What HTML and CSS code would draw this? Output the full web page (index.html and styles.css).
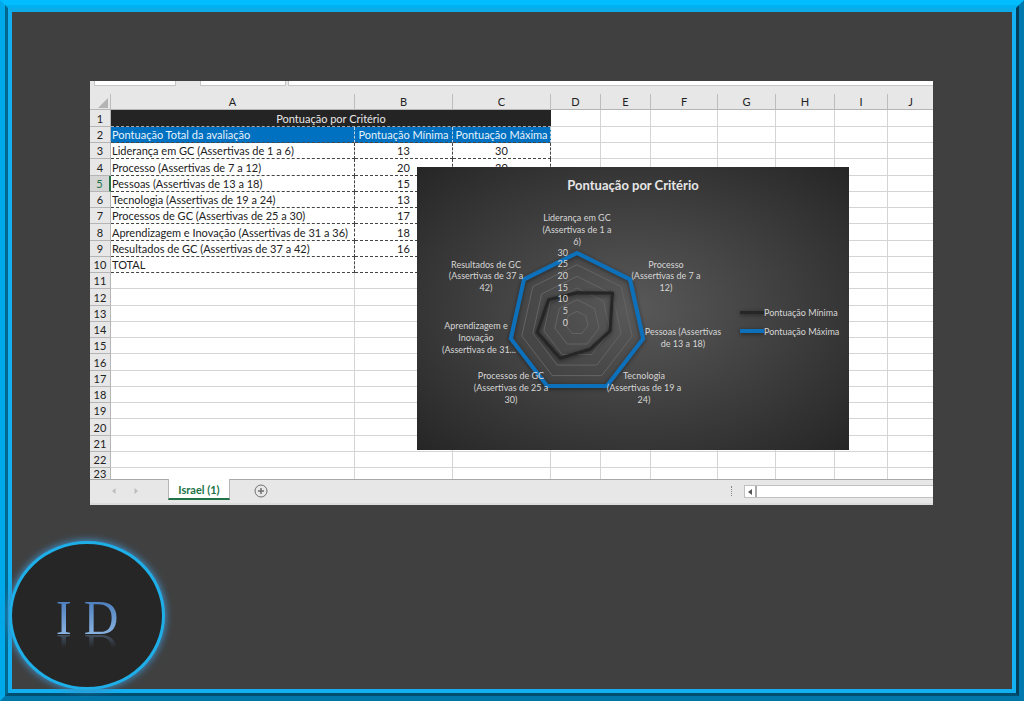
FILE: index.html
```html
<!DOCTYPE html>
<html lang="pt-BR">
<head>
<meta charset="utf-8">
<title>Pontuação por Critério</title>
<link rel="stylesheet" href="styles.css">
</head>
<body>
<div class="frame frame-outer"><div class="frame frame-middle"><main class="frame frame-inner">
  <section class="sheet">
    <div class="toolbar"><span class="name-box"></span><span class="fx-box"></span><span class="formula-box"></span></div>
    <div class="grid">
      <table>
        <colgroup><col class="c-row"><col class="c-a"><col class="c-b"><col class="c-b"><col class="c-d"><col class="c-d"><col class="c-f"><col class="c-g"><col class="c-h"><col class="c-i"><col></colgroup>
        <thead><tr><th class="corner"><svg width="10" height="10" viewBox="0 0 10 10"><path d="M10 0V10H0Z" fill="#b4b4b4"/></svg></th><th>A</th><th>B</th><th>C</th><th>D</th><th>E</th><th>F</th><th>G</th><th>H</th><th>I</th><th>J</th></tr></thead>
        <tbody>
          <tr class="title"><th>1</th><td colspan="3">Pontuação por Critério</td><td></td><td></td><td></td><td></td><td></td><td></td><td></td></tr>
          <tr class="data head"><th>2</th><td>Pontuação Total da avaliação</td><td>Pontuação Mínima</td><td>Pontuação Máxima</td><td></td><td></td><td></td><td></td><td></td><td></td><td></td></tr>
          <tr class="data"><th>3</th><td>Liderança em GC (Assertivas de 1 a 6)</td><td>13</td><td>30</td><td></td><td></td><td></td><td></td><td></td><td></td><td></td></tr>
          <tr class="data"><th>4</th><td>Processo (Assertivas de 7 a 12)</td><td>20</td><td>30</td><td></td><td></td><td></td><td></td><td></td><td></td><td></td></tr>
          <tr class="data active"><th>5</th><td>Pessoas (Assertivas de 13 a 18)</td><td>15</td><td></td><td></td><td></td><td></td><td></td><td></td><td></td><td></td></tr>
          <tr class="data"><th>6</th><td>Tecnologia (Assertivas de 19 a 24)</td><td>13</td><td></td><td></td><td></td><td></td><td></td><td></td><td></td><td></td></tr>
          <tr class="data"><th>7</th><td>Processos de GC (Assertivas de 25 a 30)</td><td>17</td><td></td><td></td><td></td><td></td><td></td><td></td><td></td><td></td></tr>
          <tr class="data"><th>8</th><td>Aprendizagem e Inovação (Assertivas de 31 a 36)</td><td>18</td><td></td><td></td><td></td><td></td><td></td><td></td><td></td><td></td></tr>
          <tr class="data"><th>9</th><td>Resultados de GC (Assertivas de 37 a 42)</td><td>16</td><td></td><td></td><td></td><td></td><td></td><td></td><td></td><td></td></tr>
          <tr class="data"><th>10</th><td>TOTAL</td><td></td><td></td><td></td><td></td><td></td><td></td><td></td><td></td><td></td></tr>
          <tr><th>11</th><td></td><td></td><td></td><td></td><td></td><td></td><td></td><td></td><td></td><td></td></tr>
          <tr><th>12</th><td></td><td></td><td></td><td></td><td></td><td></td><td></td><td></td><td></td><td></td></tr>
          <tr><th>13</th><td></td><td></td><td></td><td></td><td></td><td></td><td></td><td></td><td></td><td></td></tr>
          <tr><th>14</th><td></td><td></td><td></td><td></td><td></td><td></td><td></td><td></td><td></td><td></td></tr>
          <tr><th>15</th><td></td><td></td><td></td><td></td><td></td><td></td><td></td><td></td><td></td><td></td></tr>
          <tr><th>16</th><td></td><td></td><td></td><td></td><td></td><td></td><td></td><td></td><td></td><td></td></tr>
          <tr><th>17</th><td></td><td></td><td></td><td></td><td></td><td></td><td></td><td></td><td></td><td></td></tr>
          <tr><th>18</th><td></td><td></td><td></td><td></td><td></td><td></td><td></td><td></td><td></td><td></td></tr>
          <tr><th>19</th><td></td><td></td><td></td><td></td><td></td><td></td><td></td><td></td><td></td><td></td></tr>
          <tr><th>20</th><td></td><td></td><td></td><td></td><td></td><td></td><td></td><td></td><td></td><td></td></tr>
          <tr><th>21</th><td></td><td></td><td></td><td></td><td></td><td></td><td></td><td></td><td></td><td></td></tr>
          <tr><th>22</th><td></td><td></td><td></td><td></td><td></td><td></td><td></td><td></td><td></td><td></td></tr>
          <tr class="last"><th>23</th><td></td><td></td><td></td><td></td><td></td><td></td><td></td><td></td><td></td><td></td></tr>
        </tbody>
      </table>
    </div>
    <svg class="chart" width="432" height="283" viewBox="0 0 432 283" role="img" aria-label="Gráfico de radar: Pontuação por Critério">
      <defs>
        <radialGradient id="chart-bg" cx=".5" cy=".5" r=".7"><stop offset="0" stop-color="#595959"/><stop offset="1" stop-color="#262626"/></radialGradient>
        <polygon id="ring" points="0,-70 53,-43.6 66.2,15.6 29.7,63.1 -29.7,63.1 -66.2,15.6 -53,-43.6"/>
        <filter id="shadow" x="-20%" y="-20%" width="140%" height="140%"><feDropShadow dx="0" dy="1" stdDeviation="2" flood-color="#000" flood-opacity=".5"/></filter>
      </defs>
      <rect width="432" height="283" fill="url(#chart-bg)"/>
      <text class="chart-title" x="216" y="23">Pontuação por Critério</text>
      <g class="rings" transform="translate(160 156)">
        <use href="#ring" transform="scale(.1667)"/><use href="#ring" transform="scale(.3333)"/><use href="#ring" transform="scale(.5)"/><use href="#ring" transform="scale(.6667)"/><use href="#ring" transform="scale(.8333)"/>
      </g>
      <g fill="none" stroke-linejoin="round" filter="url(#shadow)">
        <polygon points="160,125.7 195.5,125.9 193.1,163.8 173,182.3 143.2,191.3 120.3,165.3 131.6,132.7" stroke="#252525" stroke-width="3"/>
        <use href="#ring" transform="translate(160 156)" stroke="#0f6fba" stroke-width="4"/>
      </g>
      <g class="axis">
        <text x="151" y="89">30</text><text x="151" y="100">25</text><text x="151" y="112">20</text><text x="151" y="124">15</text><text x="151" y="135">10</text><text x="151" y="147">5</text><text x="151" y="159">0</text>
      </g>
      <g class="labels">
        <text><tspan x="160" y="54">Liderança em GC</tspan><tspan x="160" y="66">(Assertivas de 1 a</tspan><tspan x="160" y="78">6)</tspan></text>
        <text><tspan x="249" y="101">Processo</tspan><tspan x="249" y="112">(Assertivas de 7 a</tspan><tspan x="249" y="124">12)</tspan></text>
        <text><tspan x="266" y="168">Pessoas (Assertivas</tspan><tspan x="266" y="180">de 13 a 18)</tspan></text>
        <text><tspan x="227" y="212">Tecnologia</tspan><tspan x="227" y="224">(Assertivas de 19 a</tspan><tspan x="227" y="236">24)</tspan></text>
        <text><tspan x="94" y="212">Processos de GC</tspan><tspan x="94" y="224">(Assertivas de 25 a</tspan><tspan x="94" y="236">30)</tspan></text>
        <text><tspan x="59" y="162">Aprendizagem e</tspan><tspan x="59" y="174">Inovação</tspan><tspan x="62" y="186">(Assertivas de 31...</tspan></text>
        <text><tspan x="69" y="101">Resultados de GC</tspan><tspan x="69" y="112">(Assertivas de 37 a</tspan><tspan x="69" y="124">42)</tspan></text>
      </g>
      <g filter="url(#shadow)"><path d="M323 147h24v-3h-24z" fill="#252525"/><path d="M323 166h24v-4h-24z" fill="#0f6fba"/></g>
      <g class="legend"><text x="347" y="149">Pontuação Mínima</text><text x="347" y="168">Pontuação Máxima</text></g>
    </svg>
    <footer class="tabs">
      <div class="nav">
        <button type="button" aria-label="Planilha anterior"><svg width="4" height="6" viewBox="0 0 4 6"><path d="M3.5 0V6L0 3Z" fill="#bdbdbd"/></svg></button>
        <button type="button" aria-label="Próxima planilha"><svg width="4" height="6" viewBox="0 0 4 6"><path d="M.5 0V6L4 3Z" fill="#bdbdbd"/></svg></button>
      </div>
      <button type="button" class="tab">Israel (1)</button>
      <button type="button" class="add" aria-label="Nova planilha"><svg width="14" height="14" viewBox="0 0 14 14" fill="none" stroke="#707070"><circle cx="7" cy="7" r="6"/><path d="M7 4V10M4 7H10" stroke-width="1.5"/></svg></button>
      <span class="grip"></span>
      <div class="scroll"><button type="button" aria-label="Rolar para a esquerda"><svg width="4" height="6" viewBox="0 0 4 6"><path d="M4 0V6L0 3Z" fill="#555"/></svg></button><span class="track"></span></div>
    </footer>
  </section>
  <div class="logo"><span>I D</span></div>
</main></div></div>
</body>
</html>
```

FILE: styles.css
```css
* { box-sizing: border-box; }
body { margin: 0; font-family: Lato, "Open Sans", sans-serif; background: #404040; }
button { margin: 0; padding: 0; border: 0; background: none; font: inherit; }
svg { display: block; }

.frame { display: flex; flex-direction: column; border-style: solid; }
.frame > .frame { flex: 1; }
.frame-outer { min-height: 100vh; border-width: 5px; border-color: #00bdff #007aae #0077a8 #00a9ea; }
.frame-middle { border-width: 3px; border-color: #00b1f2 #003f5c #004e70 #00678f; }
.frame-inner { border-width: 4px; border-color: #0cace8 #14b2f2 #12b0f0 #12b0f0; background: #404040; }

.sheet { position: relative; margin: 69px 79px 0 78px; background: #fff; color: #222; }
.toolbar { display: flex; height: 13px; padding-left: 4px; background: #e7e7e7; }
.toolbar span { height: 5px; background: #fff; border: 1px solid #c6c6c6; border-top: 0; }
.name-box { width: 82px; margin-right: 24px; }
.fx-box { width: 86px; margin-right: 2px; }
.toolbar .formula-box { flex: 1; border-right: 0; }

.grid { height: 385px; overflow: hidden; }
table { width: 100%; table-layout: fixed; border-collapse: separate; border-spacing: 0; font-size: 11px; line-height: 15px; }
.c-row { width: 21px; }
.c-a { width: 244px; }
.c-b { width: 98px; }
.c-d { width: 50px; }
.c-f { width: 67px; }
.c-g { width: 58px; }
.c-h { width: 59px; }
.c-i { width: 53px; }
th, td { height: 16px; padding: 0; white-space: nowrap; border-right: 1px solid #d4d4d4; border-bottom: 1px solid #d4d4d4; }
tbody tr:nth-child(4n) > *, .title > * { height: 17px; }
th { font-weight: 400; background: #e7e7e7; border-color: #b5b5b5; }
thead th { border-right-color: #bdbdbd; }
th:last-child, td:last-child { border-right: 0; }
.corner svg { margin: 2px 0 0 8px; }
.title td:nth-child(2) { text-align: center; color: #e8e8e8; background: #242424; border-right: 0; border-bottom: 1px dashed #aaa; }
.data td:nth-child(-n+4) { text-align: center; border-right: 1px dashed #444; border-bottom: 1px dashed #444; }
.data td:nth-child(2) { text-align: left; padding-left: 1px; }
.head td:nth-child(-n+4) { color: #e6f2fc; background: #0070c0; border-right-color: #bcd; }
.active th { color: #217346; background: #d5d5d5; border-right: 2px solid #217346; }
.last > * { height: 11px; line-height: 11px; border-bottom: 0; }

.chart { position: absolute; left: 327px; top: 86px; }
.chart text { fill: #d6d6d6; font-size: 9px; }
.chart .chart-title { fill: #e6e6e6; font-size: 13px; font-weight: 700; text-anchor: middle; }
.axis { text-anchor: end; }
.labels { text-anchor: middle; }
.rings { fill: none; stroke: #646464; }
.rings use, #ring { vector-effect: non-scaling-stroke; }

.tabs { display: flex; align-items: flex-start; height: 26px; background: #e7e7e7; border-top: 1px solid #a8a8a8; border-bottom: 2px solid #dcdcdc; }
.nav { display: flex; justify-content: center; gap: 18px; width: 78px; padding: 8px 8px 0 0; }
.tab { width: 62px; height: 21px; margin-top: -1px; padding-top: 2px; color: #217346; background: #fff; border: 1px solid #b5b5b5; border-top: 0; border-bottom: 2px solid #217346; font-size: 11px; font-weight: 700; }
.add { margin: 4px 0 0 24px; }
.grip { height: 10px; margin: 6px 12px 0 auto; border-left: 1px dotted #888; }
.scroll { display: flex; width: 189px; height: 13px; margin-top: 5px; background: #fff; border: 1px solid #c0c0c0; border-right: 0; }
.scroll button { display: grid; place-items: center; width: 12px; border-right: 2px solid #aaa; }

.logo { position: relative; display: grid; place-items: center; width: 156px; height: 149px; padding-top: 4px; margin: 36px 0 -2px -3px; border: 3px solid #1fafe8; border-radius: 50%; background: #262626; box-shadow: 0 0 7px 1px #3f8cc4; }
.logo span { font: 48px/56px "Liberation Serif", serif; color: transparent; background: linear-gradient(#4d7fbd 20%, #8fb8e4 85%); background-clip: text; -webkit-background-clip: text; -webkit-box-reflect: below -23px linear-gradient(transparent 55%, rgba(0, 0, 0, .6)); }
```
